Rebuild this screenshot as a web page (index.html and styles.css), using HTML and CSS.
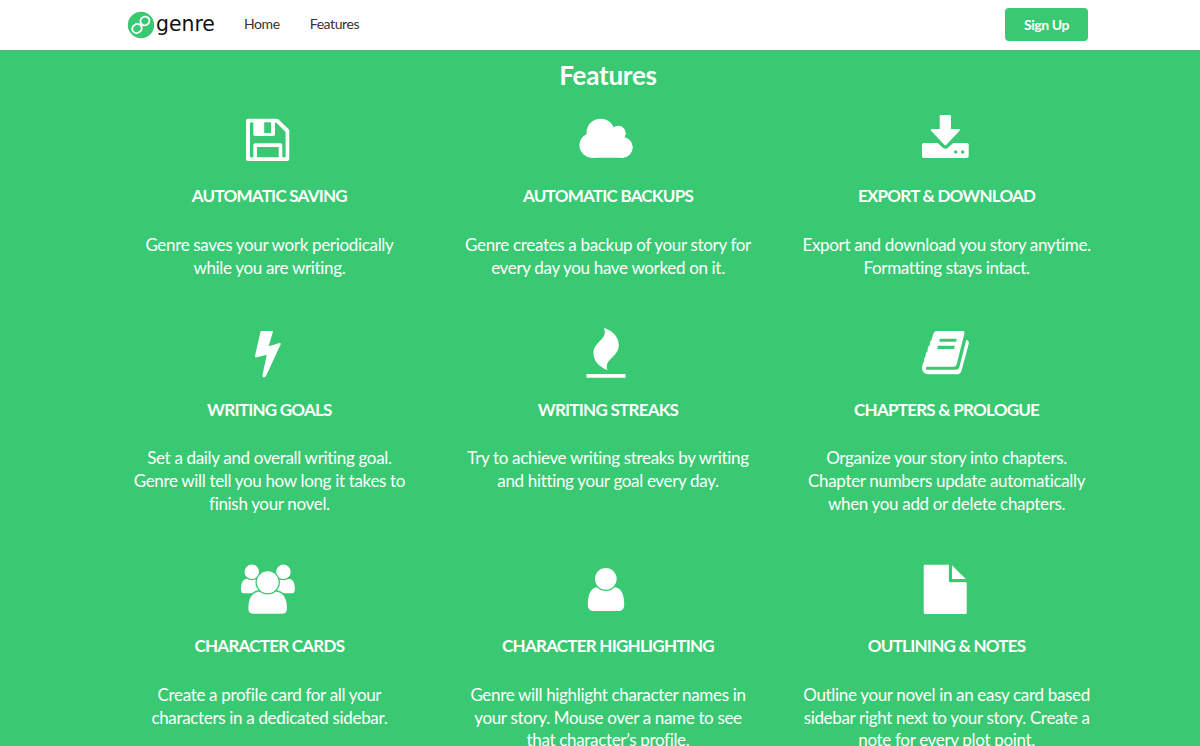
FILE: index.html
```html
<!DOCTYPE html>
<html lang="en">
<head>
    <meta charset="UTF-8" />
    <meta name="viewport" content="width=device-width, initial-scale=1.0"/>
    <title>Genre - Features</title>
    <link rel="stylesheet" href="styles.css">
</head>
<body>
    <nav class="navbar">
        <a class="logo" href="#">
            <svg class="logo-mark" viewBox="0 0 28 28">
                <circle cx="14" cy="14" r="13.2" fill="#39c972"/>
                <g fill="none" stroke="#fff" stroke-width="1.9">
                    <ellipse cx="17.9" cy="10" rx="4.6" ry="4.2" transform="rotate(-35 17.9 10)"/>
                    <ellipse cx="10" cy="17.5" rx="4.9" ry="4.3" transform="rotate(-35 10 17.5)"/>
                </g>
            </svg>
            <span>genre</span>
        </a>
        <a class="nav-link" href="#">Home</a>
        <a class="nav-link" href="#features">Features</a>
        <a class="signup" href="#">Sign Up</a>
    </nav>

    <section class="features" id="features">
        <h1>Features</h1>
        <div class="grid">
            <div class="feature">
                <svg class="icon" viewBox="0 0 60 60">
                    <path fill-rule="evenodd" d="M10 8.7H38.7Q39.8 8.7 40.6 9.5L50.4 19.1Q51.3 20 51.3 21.2V49Q51.3 51 49.3 51H10Q8 51 8 49V10.7Q8 8.7 10 8.7ZM12 12.5V47.3H15.3V35.3Q15.3 33.3 17.3 33.3H42.3Q44.3 33.3 44.3 35.3V47.3H47.6V22L38.4 12.7H37V24.2Q37 26 35.2 26H17.2Q15.3 26 15.3 24.2V12.5ZM26.2 12.2V23H33V12.2ZM19 37V47.3H40.7V37Z"/>
                </svg>
                <h3>AUTOMATIC SAVING</h3>
                <p>Genre saves your work periodically while you are writing.</p>
            </div>
            <div class="feature">
                <svg class="icon" viewBox="0 0 60 60">
                    <circle cx="24.6" cy="22.8" r="14.1"/>
                    <circle cx="42.3" cy="23.2" r="7.5"/>
                    <circle cx="15.9" cy="35.3" r="12.4"/>
                    <circle cx="46.4" cy="37.3" r="10.4"/>
                    <path d="M15.9 22H44V28L48 47.7H15.9Z"/>
                </svg>
                <h3>AUTOMATIC BACKUPS</h3>
                <p>Genre creates a backup of your story for every day you have worked on it.</p>
            </div>
            <div class="feature">
                <svg class="icon" viewBox="0 0 60 60">
                    <path d="M26 5H34.7Q36 5 36 6.3V19H44Q45.8 19.2 44.6 20.7L31.6 34.6Q30.3 35.8 29 34.6L16.1 20.7Q15 19.2 16.7 19H24.7V6.3Q24.7 5 26 5Z"/>
                    <path fill-rule="evenodd" d="M8.6 33H22.7L27.8 37.8Q30.3 39.8 32.9 37.8L38.2 33H52Q53.7 33 53.7 34.7V46.3Q53.7 48 52 48H8.6Q7 48 7 46.3V34.7Q7 33 8.6 33ZM42.4 42A1.7 1.7 0 1 0 39 42A1.7 1.7 0 1 0 42.4 42ZM49.4 42A1.7 1.7 0 1 0 46 42A1.7 1.7 0 1 0 49.4 42Z"/>
                </svg>
                <h3>EXPORT &amp; DOWNLOAD</h3>
                <p>Export and download you story anytime. Formatting stays intact.</p>
            </div>

            <div class="feature">
                <svg class="icon" viewBox="0 0 60 60">
                    <path d="M23.6 7H34Q35.2 7 34.8 8.2L30.6 22.3L41.6 19.1Q43.2 18.9 42.6 20.4L28 52Q27.4 53.4 25.8 53.4Q24 53.2 24.4 51.6L28.8 30.7L18 33.4Q16.6 33.4 17 32L22.4 8Q22.7 7 23.6 7Z"/>
                </svg>
                <h3>WRITING GOALS</h3>
                <p>Set a daily and overall writing goal. Genre will tell you how long it takes to finish your novel.</p>
            </div>
            <div class="feature">
                <svg class="icon" viewBox="0 0 60 60">
                    <path d="M27.8 3.7C37.5 7 42.8 13.5 42.8 21C42.8 33.5 27.5 34.5 31.5 46.3C22 42 17.5 36.5 17.5 29C17.5 17 33 15.5 27.8 3.7Z"/>
                    <path d="M10.5 50H49.5V53.8H10.5Z"/>
                </svg>
                <h3>WRITING STREAKS</h3>
                <p>Try to achieve writing streaks by writing and hitting your goal every day.</p>
            </div>
            <div class="feature">
                <svg class="icon" viewBox="0 0 60 60">
                    <path fill-rule="evenodd" d="M21.6 7H47.4Q50 7 49.4 9.8L41.6 40.4Q41 42.7 38.6 42.7H12.6Q10.8 42.7 10.8 44.2Q10.8 45.8 12.6 45.8H41Q43.6 45.8 44.3 43.2L51.3 15.8Q54.5 17 53.7 20L46.6 46.4Q45.4 50.3 41.6 50.3H12.6Q7 49.8 7 43.6L8 38.7L9 37.8L9.2 34.3L10.4 33L11 28.9L12.4 27.4L13 22.9L14.6 21.4L15.2 17.5L16.6 15.7L18.4 9.7Q19.1 7 21.6 7ZM25 14.8L24.2 17.8H41L41.8 14.8ZM23 21.8L22.2 24.9H39L39.8 21.8Z"/>
                </svg>
                <h3>CHAPTERS &amp; PROLOGUE</h3>
                <p>Organize your story into chapters. Chapter numbers update automatically when you add or delete chapters.</p>
            </div>

            <div class="feature">
                <svg class="icon" viewBox="0 0 60 60">
                    <path d="M7.5 19H21V33.2H5.5Q3 33.2 3 29.5C3 24 4 20.5 7.5 19Z"/>
                    <path d="M52.3 19H38.8V33.2H54.3Q56.8 33.2 56.8 29.5C56.8 24 55.8 20.5 52.3 19Z"/>
                    <circle class="cut" cx="13.8" cy="11.8" r="7.9"/>
                    <circle class="cut" cx="45.4" cy="11.8" r="7.9"/>
                    <path class="cut" d="M20 31H39Q49.6 33 49.6 48.5Q49.6 54.4 44 54.4H15.5Q9.7 54.4 9.7 48.5Q9.7 33 20 31Z"/>
                    <circle class="cut" cx="29.7" cy="22.3" r="11.6"/>
                </svg>
                <h3>CHARACTER CARDS</h3>
                <p>Create a profile card for all your characters in a dedicated sidebar.</p>
            </div>
            <div class="feature">
                <svg class="icon" viewBox="0 0 60 60">
                    <path d="M20.5 27.3H39.5C45.5 28.5 48.2 35 48.2 44.5Q48.2 51 43 51H17Q11.8 51 11.8 44.5C11.8 35 14.5 28.5 20.5 27.3Z"/>
                    <circle class="cut" cx="29.8" cy="18.8" r="11.5"/>
                </svg>
                <h3>CHARACTER HIGHLIGHTING</h3>
                <p>Genre will highlight character names in your story. Mouse over a name to see that character’s profile.</p>
            </div>
            <div class="feature">
                <svg class="icon" viewBox="0 0 60 60">
                    <path d="M10 4.7H33.9V20.8Q33.9 22.3 35.4 22.3H51.7V52.7Q51.7 54 50.4 54H10Q8.7 54 8.7 52.7V6Q8.7 4.7 10 4.7Z"/>
                    <path d="M37 5.2L50.8 19H37Z"/>
                </svg>
                <h3>OUTLINING &amp; NOTES</h3>
                <p>Outline your novel in an easy card based sidebar right next to your story. Create a note for every plot point.</p>
            </div>
        </div>
    </section>
</body>
</html>
```
FILE: styles.css
```css
body {
    font-family: Lato, 'Liberation Sans', sans-serif;
    background-color: #39c972;
    color: white;
    margin: 0;
    height: 746px;
    overflow: hidden;
}

.navbar {
    height: 50px;
    padding: 0 112px 0 127px;
    background-color: white;
    border-bottom: 1px solid #4dbb78;
    display: flex;
    align-items: center;
}

.logo {
    display: flex;
    align-items: center;
    width: 117px;
    color: #111;
    text-decoration: none;
    font-family: 'DejaVu Sans', sans-serif;
    font-size: 20.4px;
}

.logo-mark {
    width: 28px;
    height: 28px;
    margin-right: 1px;
}

.logo span {
    margin-top: -3px;
}

.nav-link {
    color: #333;
    text-decoration: none;
    font-size: 14px;
    letter-spacing: -0.4px;
    margin: 0 30px 3px 0;
}

.signup {
    margin: 0 0 1px auto;
    width: 83px;
    height: 33px;
    line-height: 34px;
    border-radius: 4px;
    background-color: #39c972;
    color: white;
    font-size: 14px;
    font-weight: bold;
    letter-spacing: -0.4px;
    text-align: center;
    text-decoration: none;
}

.features {
    padding-top: 7px;
    text-align: center;
}

h1 {
    font-size: 26px;
    line-height: 34px;
    letter-spacing: -0.25px;
    margin: 0 0 18px;
    padding-left: 16px;
}

.grid {
    display: grid;
    grid-template-columns: repeat(3, 338.6px);
    justify-content: center;
    padding-left: 16px;
}

.feature {
    padding: 0 24.8px 44.2px;
}

.icon {
    display: block;
    width: 60px;
    height: 60px;
    margin: 0 auto;
    position: relative;
    left: -1.6px;
    fill: white;
}

/* green outline that separates overlapping shapes */
.cut {
    stroke: #39c972;
    stroke-width: 1.3;
}

h3 {
    font-size: 17px;
    line-height: 22px;
    letter-spacing: -0.75px;
    margin: 15px 0 26.8px;
}

p {
    font-size: 17px;
    line-height: 22.8px;
    letter-spacing: -0.33px;
    margin: 0;
}
```
